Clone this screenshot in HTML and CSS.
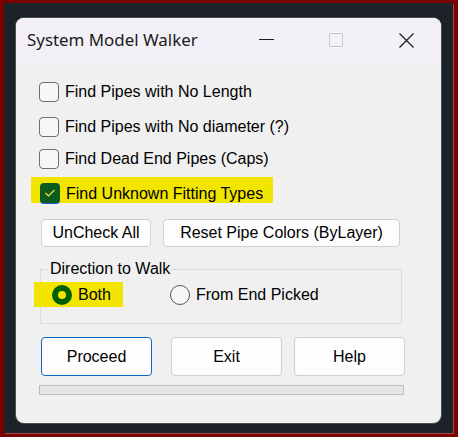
FILE: index.html
```html
<!DOCTYPE html>
<html>
<head>
<meta charset="utf-8">
<link rel="stylesheet" href="styles.css">
</head>
<body>
<div class="desk">
  <div class="window">
    <div class="titlebar">
      <div class="title">System Model Walker</div>
      <div class="controls">
        <span class="ctl"><span class="min"></span></span>
        <span class="ctl"><span class="max"></span></span>
        <span class="ctl">
          <svg width="15" height="15" viewBox="0 0 15 15"><path d="M0.5 0.5 L14.5 14.5 M14.5 0.5 L0.5 14.5" stroke="#1a1a1a" stroke-width="1.2" fill="none"/></svg>
        </span>
      </div>
    </div>
    <div class="content">
      <label class="row r1"><span class="cb"></span><span>Find Pipes with No Length</span></label>
      <label class="row r2"><span class="cb"></span><span>Find Pipes with No diameter (?)</span></label>
      <label class="row r3"><span class="cb"></span><span>Find Dead End Pipes (Caps)</span></label>
      <label class="row r4 hl"><span class="cb checked"><svg width="12" height="10" viewBox="0 0 12 10"><path d="M1.5 5 L4.5 8 L10.5 2" stroke="#f2e640" stroke-width="1.2" fill="none"/></svg></span><span>Find Unknown Fitting Types</span></label>

      <div class="btnrow">
        <button class="btn b-uncheck">UnCheck All</button>
        <button class="btn b-reset">Reset Pipe Colors (ByLayer)</button>
      </div>

      <fieldset class="group">
        <legend>Direction to Walk</legend>
        <div class="radios">
          <label class="radio hl2"><span class="rb on"></span><span>Both</span></label>
          <label class="radio second"><span class="rb"></span><span>From End Picked</span></label>
        </div>
      </fieldset>

      <div class="actions">
        <button class="btn big primary">Proceed</button>
        <button class="btn big exit">Exit</button>
        <button class="btn big help">Help</button>
      </div>

      <div class="progress"></div>
    </div>
  </div>
</div>
</body>
</html>
```

FILE: styles.css
```css
* { box-sizing: border-box; }
html, body { margin: 0; padding: 0; }
body {
  background: #7b0000;
  width: 458px;
  height: 437px;
  overflow: hidden;
  padding-top: 3px;
  padding-left: 4px;
}
.desk {
  width: 449px;
  height: 430px;
  background: #1d2229;
  box-shadow: 1px 1px 0 #a04848;
  padding-top: 15px;
  padding-left: 12px;
}
.window {
  width: 425px;
  height: 405px;
  border-radius: 8px;
  background: #f0f0f0;
  box-shadow: 0 0 0 1px #4a4f57;
  overflow: hidden;
  display: flex;
  flex-direction: column;
}
.titlebar {
  height: 44px;
  background: #f4f0f7;
  display: flex;
  align-items: center;
  justify-content: space-between;
  padding-left: 11px;
}
.title {
  font-family: "Noto Sans", sans-serif;
  font-size: 16.9px;
  color: #1b1b1b;
  padding-bottom: 2px;
}
.controls { display: flex; height: 100%; }
.ctl {
  width: 70px;
  display: flex;
  align-items: center;
  justify-content: center;
}
.min { width: 15px; height: 1px; background: #1a1a1a; margin-bottom: 1px; }
.max { width: 14px; height: 14px; border: 1.5px solid #c6c6c6; border-radius: 2px; }
.content {
  flex: 1;
  padding-left: 23px;
  font-family: "Liberation Sans", Arial, sans-serif;
  font-size: 16px;
  color: #000;
  display: flex;
  flex-direction: column;
  align-items: flex-start;
}
.row {
  display: flex;
  align-items: center;
  height: 20px;
  gap: 6px;
}
.r1 { margin-top: 20px; }
.r2 { margin-top: 14.5px; }
.r3 { margin-top: 12.5px; }
.r4 { margin-top: 8px; }
.hl {
  background: #f2e600;
  height: 26px;
  padding: 6px 0 0 9px;
  margin-left: -8px;
  width: 242px;
  align-items: flex-start;
}
.hl span:last-child { line-height: 20px; margin-top: 1px; }
.cb {
  width: 20px;
  height: 20px;
  border: 1px solid #6e6e6e;
  border-radius: 4px;
  background: #f7f7f7;
  flex: none;
}
.cb.checked {
  border: none;
  background: #0c5b1f;
  box-shadow: 0 1px 0 #1d62c6;
  display: flex;
  align-items: center;
  justify-content: center;
}
.btnrow {
  display: flex;
  gap: 12px;
  margin-top: 16px;
  margin-left: 2px;
}
.btn {
  font-family: "Liberation Sans", Arial, sans-serif;
  font-size: 16px;
  color: #000;
  background: #fdfdfd;
  border: 1px solid #d0d0d0;
  border-radius: 4px;
  height: 28px;
  padding: 0;
}
.b-uncheck { width: 110px; }
.b-reset { width: 237px; }
.group {
  margin: 13px 0 0 1px;
  padding: 0 0 16px 0;
  border: 1px solid #dcdcdc;
  width: 362px;
  min-width: 0;
}
.group legend {
  padding: 0 1px;
  margin-left: 8px;
  line-height: 18px;
}
.radios {
  display: flex;
  align-items: center;
  margin-top: 4px;
  margin-left: -7px;
}
.radio {
  display: flex;
  align-items: center;
  gap: 6px;
  height: 25px;
}
.hl2 {
  background: #f2e600;
  width: 89px;
  padding-left: 18px;
}
.second { margin-left: 47px; }
.rb {
  width: 20px;
  height: 20px;
  border-radius: 50%;
  border: 1px solid #595959;
  background: #f7f7f7;
  flex: none;
}
.rb.on {
  border: 6px solid #005f00;
  background: #f2e600;
}
.actions {
  display: flex;
  margin-top: 13px;
  margin-left: 2px;
}
.big { width: 111px; height: 39px; }
.primary { border-color: #0a6ac6; }
.exit { margin-left: 19px; }
.help { margin-left: 12px; }
.progress {
  margin-top: 9px;
  width: 365px;
  height: 10px;
  border: 1px solid #bdbdbd;
  background: #e6e6e6;
}
```
